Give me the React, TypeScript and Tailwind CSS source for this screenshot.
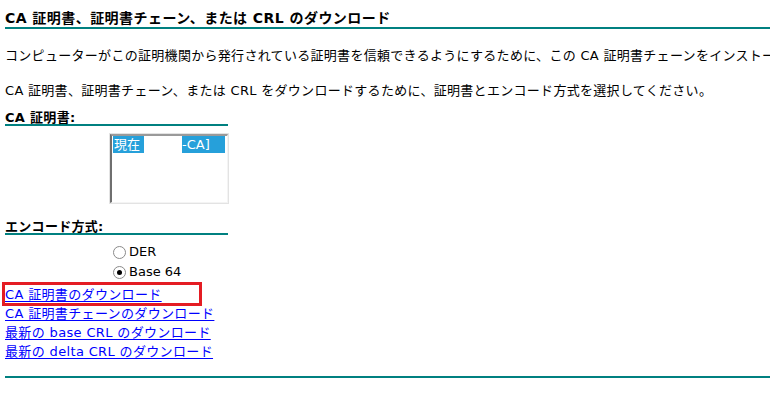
import { clsx } from "clsx";

const FONT = "font-['DejaVu_Sans','Noto_Sans_CJK_JP',sans-serif]";

function Radio({ checked, label }: { checked?: boolean; label: string }) {
  return (
    <div className="flex h-[20px] items-center pl-[113px]">
      <span className="flex h-[13px] w-[13px] items-center justify-center rounded-full border border-[#8a8a8a] bg-white">
        {checked && <span className="h-[5px] w-[5px] rounded-full bg-black" />}
      </span>
      <span className="ml-[3px] text-[13px] leading-[20px]">{label}</span>
    </div>
  );
}

function SectionHeading({ children }: { children: string }) {
  return (
    <div className="ml-[5px] w-[223px] border-b-2 border-[#008080] text-[13px] font-bold leading-[13px] tracking-[0.3px]">
      {children}
    </div>
  );
}

const links = [
  "CA 証明書のダウンロード",
  "CA 証明書チェーンのダウンロード",
  "最新の base CRL のダウンロード",
  "最新の delta CRL のダウンロード",
];

export default function App() {
  return (
    <div
      className={clsx(
        "h-[393px] w-[770px] overflow-hidden whitespace-nowrap bg-white text-black",
        FONT,
      )}
    >
      <div className="ml-[5px] border-b-2 border-[#008080] pt-[9px] text-[14px] font-bold leading-[18px] tracking-[0.45px]">
        CA 証明書、証明書チェーン、または CRL のダウンロード
      </div>

      <p className="mt-[19px] pl-[5px] text-[13px] leading-[16px] tracking-[0.3px]">
        コンピューターがこの証明機関から発行されている証明書を信頼できるようにするために、この CA 証明書チェーンをインストールしてください。
      </p>
      <p className="mt-[19px] pl-[5px] text-[13px] leading-[16px] tracking-[0.3px]">
        CA 証明書、証明書チェーン、または CRL をダウンロードするために、証明書とエンコード方式を選択してください。
      </p>

      <div className="mt-[12px]">
        <SectionHeading>CA 証明書:</SectionHeading>
      </div>

      <div className="ml-[109px] mt-[7px] h-[71px] w-[120px] border border-[#e3e3e3]">
        <div className="h-full w-full border-l-2 border-t-2 border-b border-r border-l-[#6f6f6f] border-t-[#9a9a9a] border-b-[#f4f4f4] border-r-[#f4f4f4] pl-px pr-[2px]">
          <div className="flex h-[17px] text-[13px] leading-[17px] text-white">
            <span className="w-[31px] bg-[#26a0da] pl-[1px]">現在</span>
            <span className="w-[38px] bg-white" />
            <span className="flex-1 bg-[#26a0da]">-CA]</span>
          </div>
        </div>
      </div>

      <div className="mt-[16px]">
        <SectionHeading>エンコード方式:</SectionHeading>
      </div>

      <div className="mt-[7px]">
        <Radio label="DER" />
        <Radio checked label="Base 64" />
      </div>

      <div className="mt-[3px] flex flex-col items-start pl-[5px] text-[13px] leading-[19px] tracking-[0.35px]">
        {links.map((text, i) => (
          <a
            key={text}
            href="#"
            className="relative text-[#0000ff] underline underline-offset-2"
          >
            {text}
            {i === 0 && (
              <span className="absolute -left-[3px] -top-[3px] h-[24px] w-[200px] border-[3px] border-[#e41c23]" />
            )}
          </a>
        ))}
      </div>

      <div className="ml-[5px] mt-[15px] border-t-2 border-[#008080]" />
    </div>
  );
}
